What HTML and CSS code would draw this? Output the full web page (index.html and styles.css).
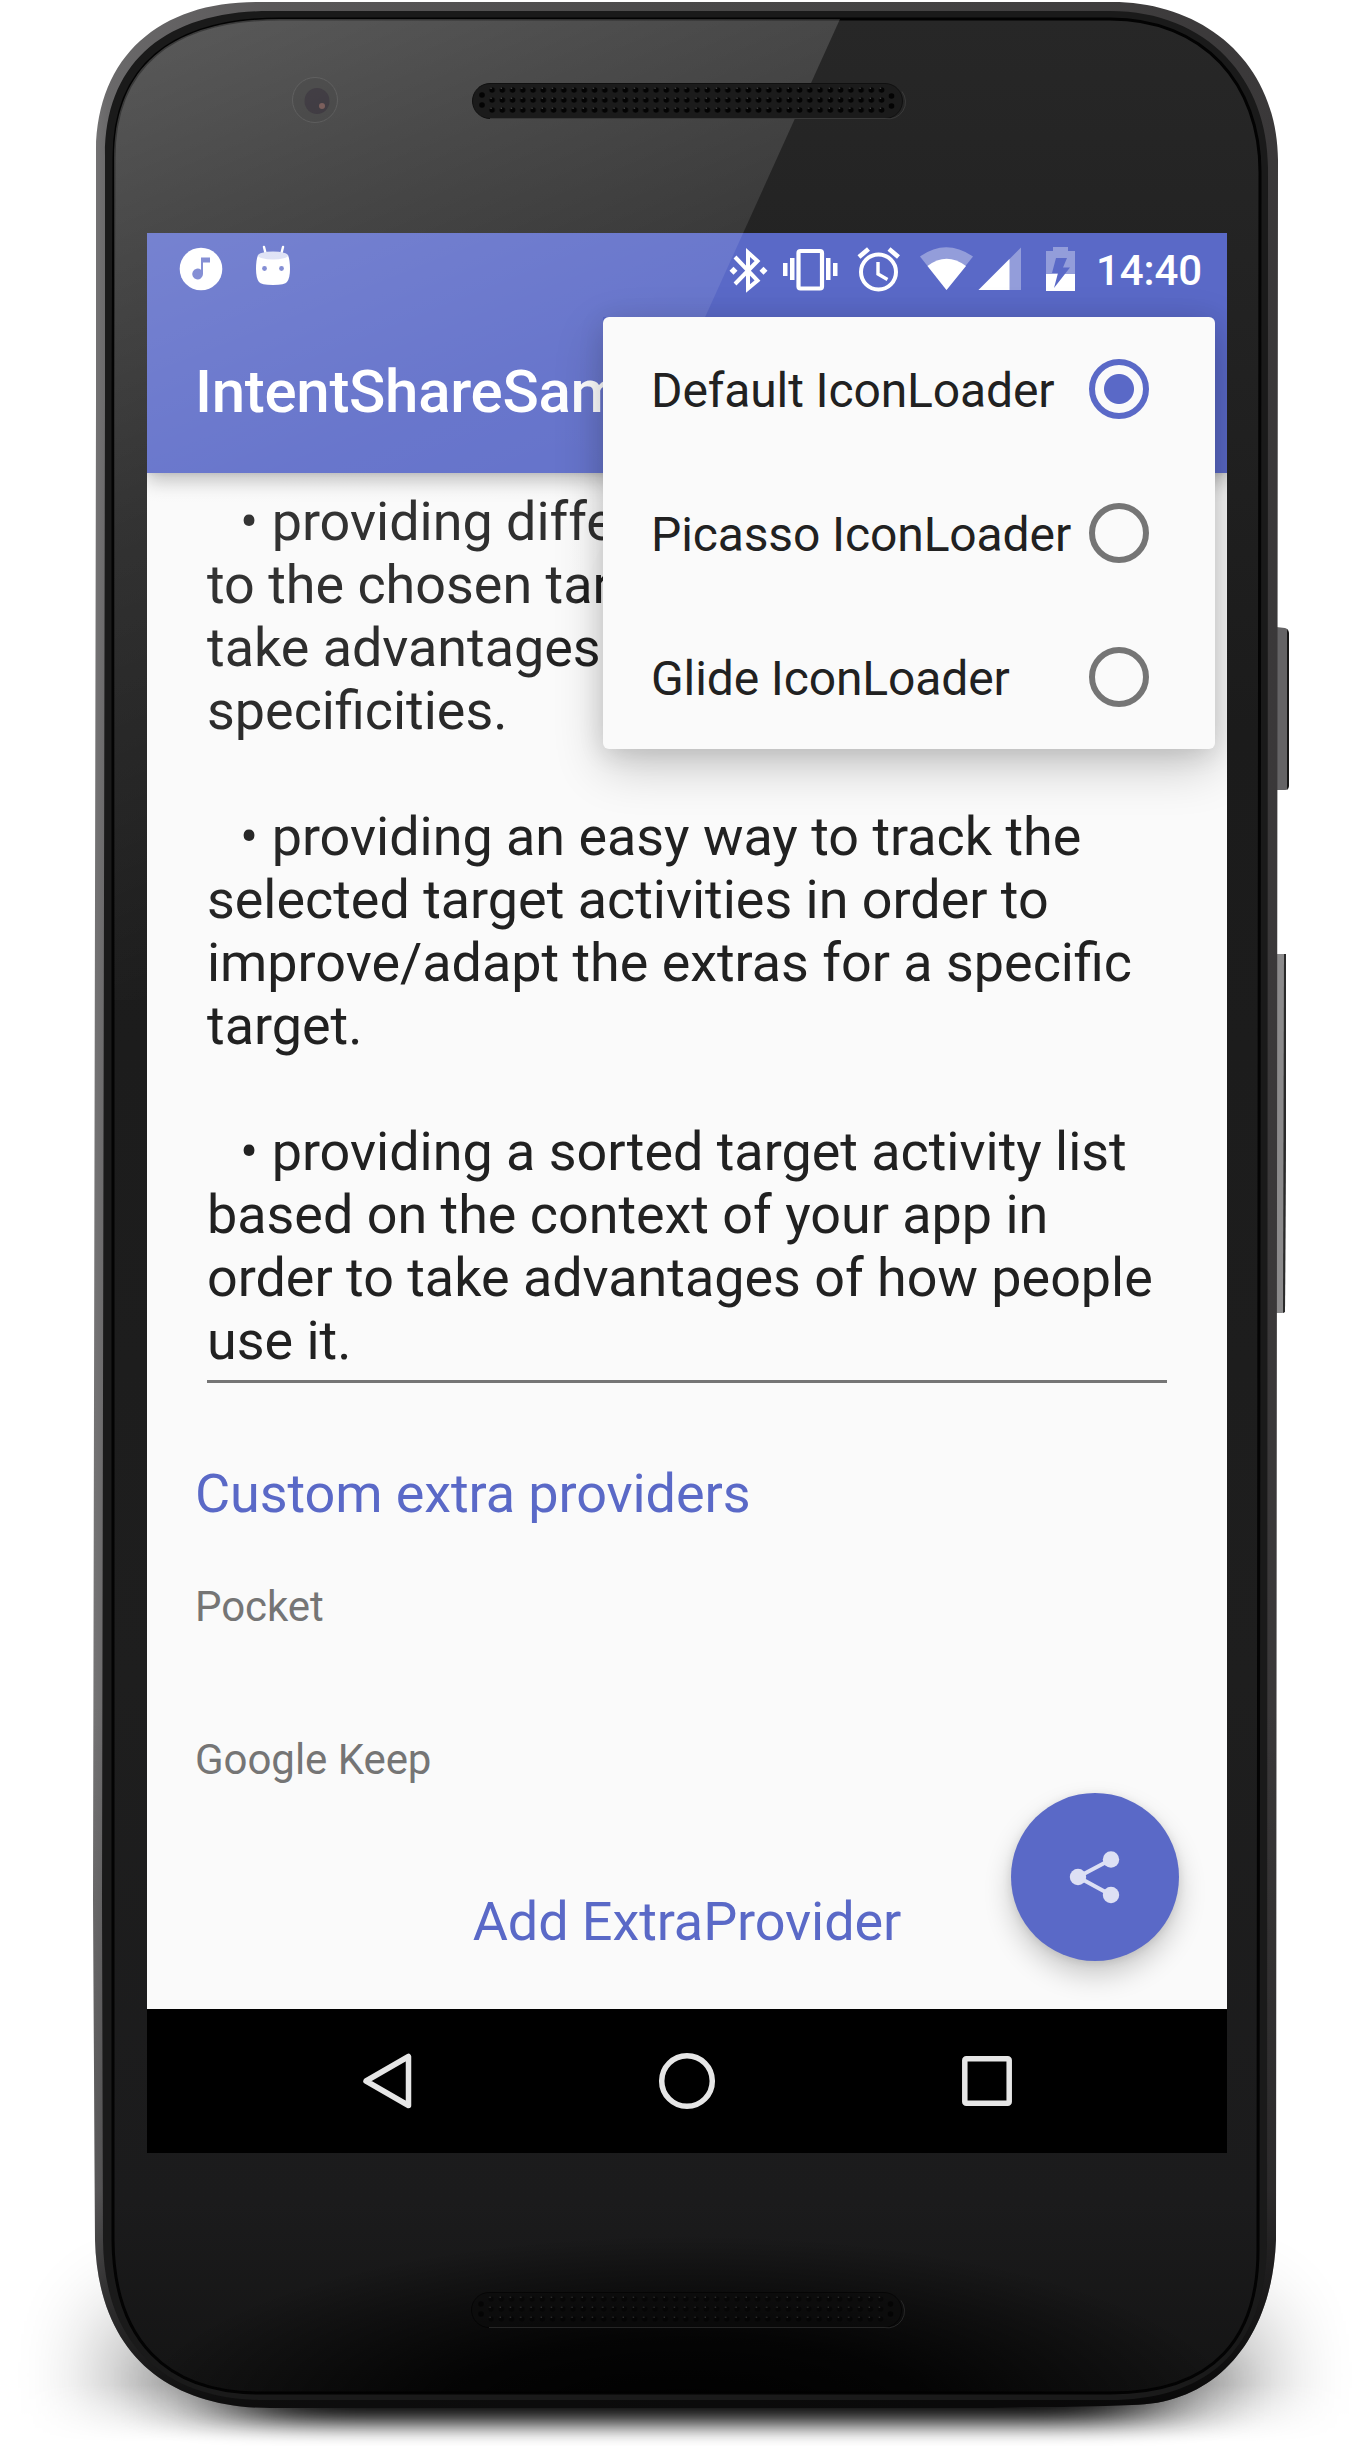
FILE: index.html
```html
<!DOCTYPE html>
<html lang="en">
<head>
<meta charset="utf-8">
<title>IntentShareSample</title>
<link rel="stylesheet" href="styles.css">
</head>
<body>
<main class="stage">
  <svg class="device" viewBox="0 0 1370 2446" aria-hidden="true">
    <defs>
      <filter id="soft" x="-20%" y="-100%" width="140%" height="300%"><feGaussianBlur stdDeviation="55 11"/></filter>
      <filter id="wide" x="-30%" y="-100%" width="160%" height="300%"><feGaussianBlur stdDeviation="46 50"/></filter>
      <linearGradient id="fade" gradientUnits="userSpaceOnUse" x1="0" y1="2385" x2="0" y2="2442">
        <stop offset="0" stop-color="#fff"/><stop offset="1" stop-color="#000"/>
      </linearGradient>
      <mask id="floor" maskUnits="userSpaceOnUse" x="0" y="2100" width="1370" height="346"><rect y="2100" width="1370" height="346" fill="url(#fade)"/></mask>
      <linearGradient id="metal" gradientUnits="userSpaceOnUse" x1="93" y1="0" x2="1278" y2="0">
        <stop offset="0" stop-color="#757475"/><stop offset=".012" stop-color="#6a696a"/><stop offset=".15" stop-color="#5a5859"/><stop offset=".5" stop-color="#4a4949"/><stop offset="1" stop-color="#3a3839"/>
      </linearGradient>
      <linearGradient id="dim" gradientUnits="userSpaceOnUse" x1="0" y1="1700" x2="0" y2="2400">
        <stop offset="0" stop-color="#000" stop-opacity="0"/><stop offset=".7" stop-color="#000" stop-opacity=".25"/><stop offset="1" stop-color="#000" stop-opacity=".85"/>
      </linearGradient>
      <linearGradient id="glass" gradientUnits="userSpaceOnUse" x1="0" y1="19" x2="0" y2="2393">
        <stop offset="0" stop-color="#272727"/><stop offset=".3" stop-color="#1b1b1b"/><stop offset=".7" stop-color="#1e1e1e"/><stop offset=".92" stop-color="#1b1b1c"/><stop offset="1" stop-color="#141414"/>
      </linearGradient>
      <radialGradient id="pool" gradientUnits="userSpaceOnUse" cx="0" cy="0" r="1" gradientTransform="translate(687 2420) scale(560 185)">
        <stop offset="0" stop-color="#000"/><stop offset=".45" stop-color="#000" stop-opacity=".8"/><stop offset="1" stop-color="#000" stop-opacity="0"/>
      </radialGradient>
      <pattern id="holes" width="10.25" height="10" patternUnits="userSpaceOnUse" x="487" y="85">
        <circle cx="5.1" cy="5" r="2.8" fill="#040404"/><circle cx="4" cy="3.2" r=".8" fill="#4a4a4a"/>
      </pattern>
      <clipPath id="body"><path d="M114 158C114 68 170 19 280 19H1110C1204 19 1260 84 1260 172L1258 2250C1258 2336 1216 2393 1110 2393H260C166 2393 114 2340 114 2240Z"/></clipPath>
    </defs>
    <g mask="url(#floor)"><path d="M110 2330H1260V2420H110Z" filter="url(#wide)" opacity=".48"/></g>
    <rect x="235" y="2360" width="915" height="63" filter="url(#soft)" opacity=".95"/>
    <path d="M1276 627l9 1q4 1 4 5v153q0 4-4 4h-9z" fill="#646365"/><path d="M1287 629l2 4v153l-2 4z" fill="#161616"/>
    <path d="M1276 954h8q2 0 2 3v178l-1 175q0 3-3 3h-6z" fill="#8b8a8b"/><path d="M1284 954h2v180l-1 178-2 1z" fill="#2a2a2a"/>
    <path d="M96 150C97 56 160 2 256 2H1112C1204 2 1277 62 1278 160L1276 2240C1272 2340 1216 2404 1132 2405Q1060 2408 960 2408H270C164 2408 98 2350 95 2240L93 1900L96 400Z" fill="url(#metal)"/>
    <path d="M96 150C97 56 160 2 256 2H1112C1204 2 1277 62 1278 160L1276 2240C1272 2340 1216 2404 1132 2405Q1060 2408 960 2408H270C164 2408 98 2350 95 2240L93 1900L96 400Z" fill="url(#dim)"/>
    <path d="M105 155C105 62 166 11 270 11H1110C1208 11 1268 80 1268 168L1267 2246C1265 2344 1212 2400 1110 2400H264C162 2400 104 2342 103 2240L102 1900L105 400Z" fill="#1a1a1a"/>
    <path d="M114 158C114 68 170 19 280 19H1110C1204 19 1260 84 1260 172L1258 2250C1258 2336 1216 2393 1110 2393H260C166 2393 114 2340 113 2240V400Z" fill="url(#glass)" stroke="#030303" stroke-width="3"/>
    <g clip-path="url(#body)">
      <rect x="100" y="2200" width="1170" height="200" fill="url(#pool)"/>
    </g>
    <circle cx="315" cy="100" r="22.5" fill="#222" stroke="#3a3a3a"/>
    <ellipse cx="317" cy="101" rx="12.500" ry="13" fill="#151018"/><circle cx="322" cy="106" r="3" fill="#5d3a37"/>
  </svg>

  <section class="screen">
    <header class="appbar">
      <div class="status">
        <svg class="note" viewBox="0 0 44 44"><circle cx="22" cy="22" r="21.3" fill="#fff"/><path d="M22 10.500h9v5h-7v11.500a5.400 5.400 0 1 1-2-4.200z" fill="#6f7bcd"/></svg>
        <svg class="droid" viewBox="0 0 36 42"><path d="M9 2l2 8M28 2l-2 8" stroke="#fff" stroke-width="2.400" stroke-linecap="round"/><path d="M3 10Q18 15 33 10Q35 15 35 24T32 37Q30 40 18 40T4 37Q1 33 1 24T3 10Z" fill="#fff"/><ellipse cx="18" cy="10.500" rx="15" ry="4" fill="#dadef4"/><circle cx="9.500" cy="23.500" r="2.400" fill="#6f7bcd"/><circle cx="26.500" cy="23.500" r="2.400" fill="#6f7bcd"/></svg>
        <svg class="tray" viewBox="728 245 350 52" fill="none">
          <path d="M735 257L757.500 280.500L748 288.500V252.500L757.500 261L735 284" stroke="#fff" stroke-width="4"/>
          <path d="M729.500 270.700l4-4 4 4-4 4zM759.500 270.700l4-4 4 4-4 4z" fill="#fff"/>
          <rect x="798.500" y="251" width="23.500" height="37.500" rx="2" stroke="#fff" stroke-width="4.200"/>
          <path d="M783 263h4.500v13H783zM790 258h4.500v22H790zM826 258h4.500v22H826zM833 263h4.500v13H833z" fill="#fff"/>
          <circle cx="878.500" cy="272" r="17.500" stroke="#fff" stroke-width="4"/><path d="M878 262v12l9.500 5.500" stroke="#fff" stroke-width="3.400"/><path d="M859 257l9.500-8M898.500 257l-9.500-8" stroke="#fff" stroke-width="4.600"/>
          <path d="M920 256.500Q946 238 973 256.500L946.500 290z" fill="#fff" fill-opacity=".35"/><path d="M927.500 266Q946.500 251.500 966 266L946.500 290z" fill="#fff"/>
          <path d="M1021 247.500V290h-42.500z" fill="#fff" fill-opacity=".35"/><path d="M1009.500 259v31h-31z" fill="#fff"/>
          <path d="M1046 251h7v-4h15v4h7v24h-29z" fill="#fff" fill-opacity=".35"/><path d="M1046 274h29v17h-29z" fill="#fff"/><path d="M1056 258h11l-4 9.500h7l-16 20.500 4-15h-6z" fill="#5a69c7"/>
        </svg>
        <span class="clock">14:40</span>
      </div>
      <h1 class="title">IntentShareSample</h1>
    </header>

    <div class="content">
      <div class="edit"><p class="item">&nbsp;&nbsp; • providing different<br>to the chosen target<br>take advantages of<br>specificities.</p><p class="item">&nbsp;&nbsp; • providing an easy way to track the<br>selected target activities in order to<br>improve/adapt the extras for a specific<br>target.</p><p class="item">&nbsp;&nbsp; • providing a sorted target activity list<br>based on the context of your app in<br>order to take advantages of how people<br>use it.</p></div>
      <h2 class="heading">Custom extra providers</h2>
      <p class="provider">Pocket</p>
      <p class="provider">Google Keep</p>
      <div class="add">Add ExtraProvider</div>
    </div>

    <nav class="navbar">
      <svg viewBox="0 0 60 60"><path d="M51.500 7.500v49L9 32z" transform="translate(0 -2)" /></svg>
      <svg viewBox="0 0 60 60"><circle cx="30" cy="30" r="25.300"/></svg>
      <svg viewBox="0 0 60 60"><rect x="7.800" y="7.800" width="44.400" height="44.400" rx="1.500"/></svg>
    </nav>

    <button class="fab" aria-label="Share"><svg viewBox="0 0 52 54"><path d="M42 9.500L9 27l33 18" fill="none" stroke="#dde0f4" stroke-width="4"/><g fill="#dde0f4"><circle cx="42" cy="9.500" r="8.200"/><circle cx="9" cy="27" r="8.200"/><circle cx="42" cy="45" r="8.200"/></g></svg></button>

    <div class="menu">
      <div class="option"><span>Default IconLoader</span><i class="radio on"></i></div>
      <div class="option"><span>Picasso IconLoader</span><i class="radio"></i></div>
      <div class="option"><span>Glide IconLoader</span><i class="radio"></i></div>
    </div>
  </section>

  <svg class="glare" viewBox="0 0 1370 2446" aria-hidden="true">
    <defs>
      <linearGradient id="shine" gradientUnits="userSpaceOnUse" x1="114" y1="20" x2="465" y2="903"><stop offset="0" stop-color="#fff" stop-opacity=".24"/><stop offset=".22" stop-color="#fff" stop-opacity=".17"/><stop offset=".5" stop-color="#fff" stop-opacity=".09"/><stop offset=".75" stop-color="#fff" stop-opacity=".05"/><stop offset="1" stop-color="#fff" stop-opacity="0"/></linearGradient>
      <clipPath id="open"><path d="M0 0H1370V317H603V749H600V1050H0Z"/></clipPath>
    </defs>
    <path d="M114 158C114 68 170 19 280 19H840L396 1000H114Z" fill="url(#shine)" clip-path="url(#open)"/>
    <g>
      <rect x="472.500" y="83.500" width="430" height="35" rx="17.500" fill="#1b1b1b" stroke="#101010"/>
      <path d="M490 118.500H885a17 17 0 0 0 17-27" fill="none" stroke="#3a3a3a"/>
      <rect x="487" y="85" width="399.700" height="30" fill="url(#holes)"/>
      <g fill="#040404"><circle cx="482" cy="95" r="2.800"/><circle cx="482" cy="105" r="2.800"/><circle cx="891.500" cy="96" r="2.800"/><circle cx="891.500" cy="106" r="2.800"/></g>
    </g>
    <g transform="translate(-1 2209)" opacity=".6">
      <rect x="472.500" y="83.500" width="430" height="35" rx="17.500" fill="#0c0c0c" stroke="#000"/>
      <path d="M490 118.500H885a17 17 0 0 0 17-27" fill="none" stroke="#3a3a3a"/>
      <rect x="487" y="85" width="399.700" height="30" fill="url(#holes)"/>
      <g fill="#000"><circle cx="482" cy="95" r="2.800"/><circle cx="482" cy="105" r="2.800"/><circle cx="891.500" cy="95" r="2.800"/><circle cx="891.500" cy="105" r="2.800"/></g>
    </g>
  </svg>
</main>
</body>
</html>
```
FILE: styles.css
```css
* { box-sizing: border-box; margin: 0; padding: 0; }
body { background: #fff; font-family: Roboto, sans-serif; }
.stage { position: relative; width: 1370px; height: 2446px; padding: 233px 0 0 147px; overflow: hidden; }
.device, .glare { position: absolute; left: 0; top: 0; width: 1370px; height: 2446px; }
.glare { pointer-events: none; }
.screen { position: relative; width: 1080px; height: 1920px; background: #fafafa; display: flex; flex-direction: column; overflow: hidden; }
.appbar { position: relative; flex: none; height: 240px; background: #5a69c7; color: #fff; box-shadow: 0 8px 18px rgba(0,0,0,.26), 0 0 6px rgba(0,0,0,.1); }
.status { height: 72px; display: flex; align-items: center; padding: 0 26px 0 32px; }
.note { width: 44px; height: 44px; flex: none; }
.droid { width: 36px; height: 42px; margin: -6px 0 0 32px; flex: none; }
.tray { width: 350px; height: 52px; margin: 3px 0 0 auto; flex: none; }
.clock { font-size: 42px; font-weight: 500; line-height: 72px; margin: 3px 0 0 18px; width: 105px; text-align: right; letter-spacing: -.1px; }
.title { height: 168px; padding-left: 48px; font-size: 60px; font-weight: 500; line-height: 173px; letter-spacing: -.3px; }
.content { flex: 1; padding: 17px 48px 0; color: #212121; }
.edit { margin: 0 12px; border-bottom: 3px solid #757575; font-size: 53.88px; line-height: 63px; padding-bottom: 8px; display: flex; flex-direction: column; gap: 63px; white-space: nowrap; }
.item { text-indent: -7px; }
.heading { color: #5a69c7; font-size: 54px; font-weight: 400; line-height: 64px; letter-spacing: -.1px; margin-top: 79px; }
.provider { color: #757575; font-size: 42px; line-height: 49px; letter-spacing: -.05px; margin-top: 56px; }
.provider + .provider { margin-top: 104px; }
.add { color: #5a69c7; font-size: 54px; line-height: 64px; letter-spacing: -.1px; text-align: center; margin-top: 106px; }
.navbar { flex: none; height: 144px; background: #000; display: flex; justify-content: center; align-items: center; gap: 240px; }
.navbar svg { width: 60px; height: 60px; fill: none; stroke: #e6e6e6; stroke-width: 5.5; stroke-linejoin: round; }
.fab { position: absolute; left: 864px; top: 1560px; width: 168px; height: 168px; border: 0; border-radius: 50%; background: #5a69c7; display: flex; align-items: center; justify-content: center; box-shadow: 0 14px 28px rgba(0,0,0,.2), 0 2px 10px rgba(0,0,0,.1); }
.fab svg { width: 52px; height: 54px; }
.menu { position: absolute; left: 456px; top: 84px; width: 612px; height: 432px; border-radius: 6px; background: #fafafa; box-shadow: 0 18px 50px rgba(0,0,0,.2), 0 4px 26px rgba(0,0,0,.12); }
.option { height: 144px; padding: 0 66px 0 48px; display: flex; align-items: center; justify-content: space-between; color: #212121; font-size: 48px; letter-spacing: -.12px; white-space: nowrap; }
.option span { padding-top: 2px; }
.radio { width: 60px; height: 60px; flex: none; border: 6px solid #757575; border-radius: 50%; }
.radio.on { border-color: #5a69c7; background: radial-gradient(circle, #5a69c7 14.5px, transparent 15.5px); }
```
